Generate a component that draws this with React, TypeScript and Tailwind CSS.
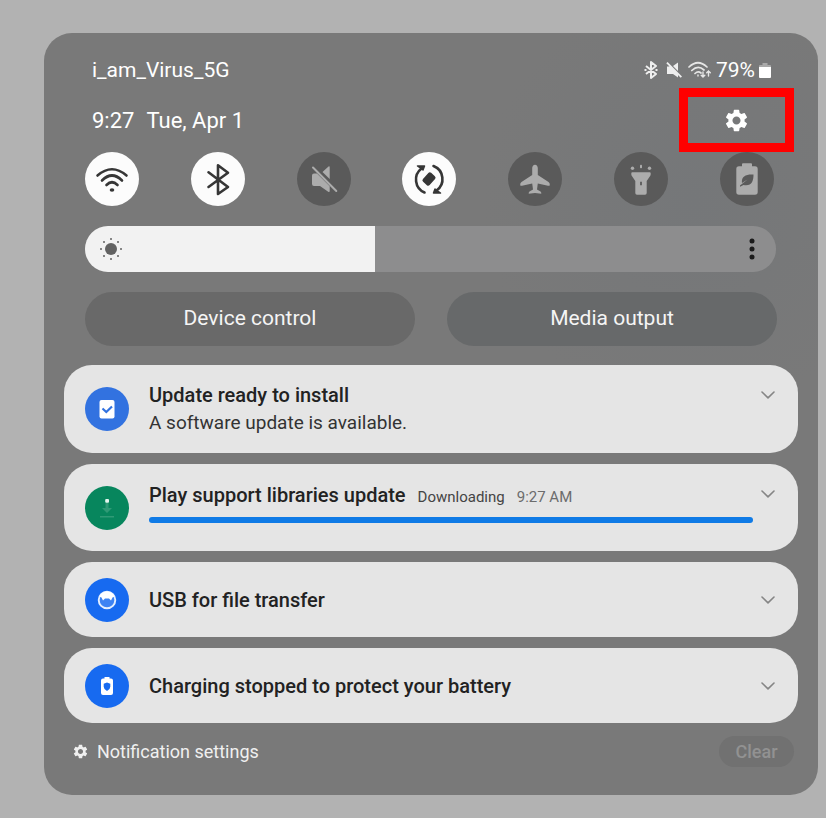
import { useState, type ReactNode } from "react";
import { MdSettings } from "react-icons/md";

const WifiIcon = () => (
  <svg viewBox="0 0 54 54" className="size-full" fill="none" stroke="currentColor" strokeWidth="2.6" strokeLinecap="round">
    <path d="M12.5 23.5Q27 11 41.500 23.500M17 28.500Q27 18.500 37 28.500M21.500 33Q27 27.500 32.500 33" />
    <ellipse cx="27" cy="38" rx="2.300" ry="1.700" fill="currentColor" stroke="none" />
  </svg>
);

const BluetoothIcon = () => (
  <svg viewBox="0 0 54 54" className="size-full" fill="none" stroke="currentColor" strokeWidth="2.600" strokeLinecap="round" strokeLinejoin="round">
    <path d="M17.500 20.300 37 35l-10 7V13.300l10 7.400L17.500 35" />
  </svg>
);

const MuteIcon = () => (
  <svg viewBox="0 0 54 54" className="size-full" fill="currentColor">
    <path d="M17 21.500h3L32.700 34.300V39q0 1.700-1.500.8L23 34h-6q-2 0-2-2v-8.500q0-2 2-2zM25.500 20l6-5.500q1.200-.8 1.200.7V27z" />
    <path d="M16 15.500 39.300 39" stroke="currentColor" strokeWidth="2" strokeLinecap="round" />
  </svg>
);

const RotateIcon = () => (
  <svg viewBox="0 0 54 54" className="size-full" fill="none" stroke="currentColor" strokeWidth="2.600" strokeLinecap="round">
    <path d="M19.500 16.500A14 14 0 0 0 22.500 40.500M31.500 14A14 14 0 0 1 34.500 38.500" />
    <path d="M15.500 14h7l-1.500 4zM38.500 41h-7l1.500-4z" fill="currentColor" strokeWidth="1.500" strokeLinejoin="round" />
    <rect x="22.500" y="21" width="9" height="12" rx="2" fill="currentColor" stroke="none" transform="rotate(42 27 27)" />
  </svg>
);

const PlaneIcon = () => (
  <svg viewBox="0 0 54 54" className="size-full" fill="currentColor">
    <path d="M27 12.700c1.900 0 2.800 1.800 2.800 3.800V23l10.700 7q1.500 1 1.300 3-.2 1.200-1.800.7L29.800 31.500 29 37.500l3.500 2q1 .7.800 2.200L27 41l-6.300.7q-.2-1.500.8-2.200l3.500-2-.8-6L14 33.700q-1.600.5-1.800-.7-.2-2 1.300-3l10.700-7v-6.500c0-2 .9-3.800 2.800-3.800z" />
  </svg>
);

const TorchIcon = () => (
  <svg viewBox="0 0 54 54" className="size-full" fill="currentColor">
    <path fillRule="evenodd" d="M18.300 20.300h17.400q1 0 1 1v1q0 1-.6 1.800L32.700 29v12q0 1.700-1.700 1.700h-8q-1.700 0-1.700-1.700V29l-3.400-4.900q-.6-.8-.6-1.800v-1q0-1 1-1zM26.100 29.800v3.400h1.800v-3.400z" />
    <circle cx="18.500" cy="16.300" r="1.700" />
    <rect x="26" y="12.700" width="2" height="3.600" rx=".8" />
    <circle cx="35.500" cy="16.300" r="1.700" />
  </svg>
);

const EcoBatteryIcon = () => (
  <svg viewBox="0 0 54 54" className="size-full" fill="currentColor">
    <path fillRule="evenodd" d="M23 11.300h8q1 0 1 1v2h3q2.700 0 2.700 2.700v23q0 2.700-2.700 2.700H19q-2.700 0-2.700-2.700V17q0-2.700 2.700-2.700h3v-2q0-1 1-1zM33.500 22.500c-7-.5-12.500 1.500-11.500 8.500l5.500-3.500L20 33.500v1.300l3.500-1.800c8 1.500 10-3.500 10-10.500z" />
  </svg>
);

const Chevron = () => (
  <svg viewBox="0 0 14 8" className="h-2 w-3.5" fill="none" stroke="#858585" strokeWidth="1.600" strokeLinecap="round" strokeLinejoin="round">
    <path d="m1 1 6 5.800L13 1" />
  </svg>
);

const UpdateGlyph = () => (
  <svg viewBox="0 0 44 44" className="size-full">
    <rect x="14.500" y="13" width="15" height="18.500" rx="2" fill="#fff" />
    <path d="m17.500 21.500 3.800 3.500 5.700-5.500" fill="none" stroke="#3272e0" strokeWidth="2.200" />
  </svg>
);

const DownloadGlyph = () => (
  <svg viewBox="0 0 44 44" className="size-full" fill="#2f9a76">
    <path d="M20.500 17h3v5H27l-5 5-5-5h3.500zM15 30h14v1.500H15z" />
    <rect x="20.200" y="13" width="3.800" height="3.800" rx="1" fill="#e4f5ee" />
  </svg>
);

const UsbGlyph = () => (
  <svg viewBox="0 0 44 44" className="size-full">
    <circle cx="22" cy="22" r="8.300" fill="#3d83f3" stroke="#e4efff" strokeWidth="1.900" />
    <path d="M14.500 18.500q2.500-5 7.500-5t7.500 5l-2 1-1.500 3-2-2h-4l-2 2-1.500-3z" fill="#fff" />
  </svg>
);

const ProtectGlyph = () => (
  <svg viewBox="0 0 44 44" className="size-full">
    <path d="M19.500 13h5v1.500H26q2 0 2 2V29q0 2-2 2h-8q-2 0-2-2V16.500q0-2 2-2h1.500z" fill="#fff" />
    <path d="m22 18.500 3.300 1.300v3q0 2.500-3.300 4.200-3.300-1.700-3.300-4.200v-3z" fill="#176af0" />
  </svg>
);

const tiles: { label: string; on: boolean; icon: ReactNode }[] = [
  { label: "Wi-Fi", on: true, icon: <WifiIcon /> },
  { label: "Bluetooth", on: true, icon: <BluetoothIcon /> },
  { label: "Mute", on: false, icon: <MuteIcon /> },
  { label: "Auto rotate", on: true, icon: <RotateIcon /> },
  { label: "Airplane mode", on: false, icon: <PlaneIcon /> },
  { label: "Flashlight", on: false, icon: <TorchIcon /> },
  { label: "Power saving", on: false, icon: <EcoBatteryIcon /> },
];

function StatusBar() {
  return (
    <div className="flex h-[55px] items-end justify-between pr-[27px] pb-1.5 pl-7 text-white">
      <span className="text-[21px] leading-6">i_am_Virus_5G</span>
      <div className="flex h-6 items-center">
        <svg viewBox="0 0 14 18" className="h-[18px] w-3.5" fill="none" stroke="#eee" strokeWidth="2" strokeLinejoin="round">
          <path d="m2 5 10 8-5 4V1l5 4-10 8M.5 9h2M11.500 9h2" />
        </svg>
        <svg viewBox="0 0 16 16" className="ml-2 size-4" fill="#eee">
          <path d="M1 4.500h3.500l7.500 8v3L7 12H1zM7 4l5-3.500V9zM.3 1.200 1.600 0 16 14.500l-1.300 1.200z" />
        </svg>
        <svg viewBox="0 0 24 18" className="ml-1.5 h-[18px] w-6" fill="none" stroke="#e6e6e6" strokeWidth="1.700" strokeLinecap="round">
          <path d="M1 6Q10-2.500 19 6M3.800 9.500Q10 3.500 16 9M7 12.500q3-2.800 6-.5" />
          <path d="M10 14v1M15 11v5m-1.800-1.800L15 16l1.800-1.800M20.500 15v-5m-1.800 1.800 1.800-1.800 1.800 1.800" strokeWidth="1.400" />
        </svg>
        <span className="ml-1 text-[21px] leading-6">79%</span>
        <svg viewBox="0 0 12 15" className="ml-1 h-[15px] w-3">
          <path d="M3.500 0h5v2H11q1 0 1 1v2H0V3q0-1 1-1h2.500z" fill="#a9a9a9" />
          <path d="M0 4h12v10q0 1-1 1H1q-1 0-1-1z" fill="#fff" />
        </svg>
      </div>
    </div>
  );
}

function Brightness() {
  const [level, setLevel] = useState(42);
  return (
    <div className="relative mr-[22px] ml-[21px] mt-5 h-[46px]">
      <input
        type="range"
        aria-label="Brightness"
        min={0}
        max={100}
        value={level}
        onChange={(e) => setLevel(Number(e.target.value))}
        style={{ backgroundImage: `linear-gradient(to right, #f2f2f2 ${level}%, #8d8d8e ${level}%)` }}
        className="block h-full w-full appearance-none rounded-full [&::-webkit-slider-thumb]:size-11 [&::-webkit-slider-thumb]:appearance-none [&::-webkit-slider-thumb]:opacity-0"
      />
      <svg viewBox="0 0 24 24" className="pointer-events-none absolute top-[11px] left-3.5 size-6" fill="#626262">
        <circle cx="12" cy="12" r="6" />
        <circle cx="12" cy="2" r="1" />
        <circle cx="12" cy="22" r="1" />
        <circle cx="2" cy="12" r="1" />
        <circle cx="22" cy="12" r="1" />
        <circle cx="5" cy="5" r="1" />
        <circle cx="19" cy="5" r="1" />
        <circle cx="5" cy="19" r="1" />
        <circle cx="19" cy="19" r="1" />
      </svg>
      <button type="button" aria-label="More brightness options" className="absolute top-0 right-2 flex h-full w-8 items-center justify-center">
        <svg viewBox="0 0 6 22" className="h-[22px] w-1.5" fill="#1b1b1b">
          <circle cx="3" cy="3" r="2.500" />
          <circle cx="3" cy="11" r="2.500" />
          <circle cx="3" cy="19" r="2.500" />
        </svg>
      </button>
    </div>
  );
}

function Notice({ glyph, color, children, size, top }: { glyph: ReactNode; color: string; children: ReactNode; size: string; top?: boolean }) {
  return (
    <li className={`flex items-center rounded-[28px] bg-[#e5e5e5] pr-[23px] pl-[21px] ${size}`}>
      <div className={`size-11 shrink-0 rounded-full ${color}`}>{glyph}</div>
      <div className="ml-5 min-w-0 flex-1">{children}</div>
      <button type="button" aria-label="Expand" className={`flex shrink-0 justify-center ${top ? "mt-[26px] self-start" : ""}`}>
        <Chevron />
      </button>
    </li>
  );
}

const title = "text-xl leading-7 font-medium text-[#222]";

export default function App() {
  return (
    <main className="min-h-screen bg-[#b2b2b2] pt-[33px] pr-2 pb-6 pl-11 font-[Roboto,sans-serif]">
      <section className="rounded-[28px] bg-[#797979] bg-[radial-gradient(circle_at_84%_22%,#757779,#797979_24%)] px-5 pb-7">
        <StatusBar />
        <div className="flex h-16 items-center justify-between pr-1 pl-7 text-white">
          <div className="flex gap-3 pt-0.5 text-[22px] leading-7">
            <span>9:27</span>
            <span>Tue, Apr 1</span>
          </div>
          <button type="button" aria-label="Settings" className="flex h-16 w-[115px] items-center justify-center border-[9px] border-[#ff0000]">
            <MdSettings className="size-[27px]" />
          </button>
        </div>

        <div className="flex justify-between pr-6 pl-[21px]">
          {tiles.map((t) => (
            <button
              key={t.label}
              type="button"
              aria-label={t.label}
              aria-pressed={t.on}
              className={`size-[54px] rounded-full ${t.on ? "bg-[#fcfcfc] text-[#363636]" : "bg-[#5a5a5a] text-[#acacac]"}`}
            >
              {t.icon}
            </button>
          ))}
        </div>

        <Brightness />

        <div className="mx-[21px] mt-5 grid grid-cols-2 gap-8 text-[21px] text-[#f5f5f5]">
          <button type="button" className="h-[54px] rounded-full bg-[#696969]">Device control</button>
          <button type="button" className="h-[54px] rounded-full bg-[#67696a]">Media output</button>
        </div>

        <ul className="mt-[19px] flex flex-col gap-[11px]">
          <Notice glyph={<UpdateGlyph />} color="bg-[#3272e0]" size="h-[88px]" top>
            <h2 className={title}>Update ready to install</h2>
            <p className="text-[19px] leading-7 text-[#333]">A software update is available.</p>
          </Notice>
          <Notice glyph={<DownloadGlyph />} color="bg-[#07865d]" size="h-[87px]" top>
            <div className="pr-2 pb-3">
              <div className="flex items-baseline">
                <h2 className={title}>Play support libraries update</h2>
                <span className="ml-3 text-[15px] text-[#444]">Downloading</span>
                <span className="ml-3 text-[15px] text-[#6c6c6c]">9:27 AM</span>
              </div>
              <div role="progressbar" aria-label="Download progress" className="mt-2 h-1.5 rounded-full bg-[#107be6]" />
            </div>
          </Notice>
          <Notice glyph={<UsbGlyph />} color="bg-[#176af0]" size="h-[75px]">
            <h2 className={title}>USB for file transfer</h2>
          </Notice>
          <Notice glyph={<ProtectGlyph />} color="bg-[#176af0]" size="h-[75px]">
            <h2 className={title}>Charging stopped to protect your battery</h2>
          </Notice>
        </ul>

        <footer className="mt-[13px] flex items-center justify-between pr-1 pl-2">
          <button type="button" className="flex items-center gap-2 text-lg text-[#f0f0f0]">
            <MdSettings className="size-[17px]" />
            Notification settings
          </button>
          <button type="button" className="h-[31px] w-[75px] rounded-full bg-[#717171] text-lg font-medium text-[#929292]">Clear</button>
        </footer>
      </section>
    </main>
  );
}
